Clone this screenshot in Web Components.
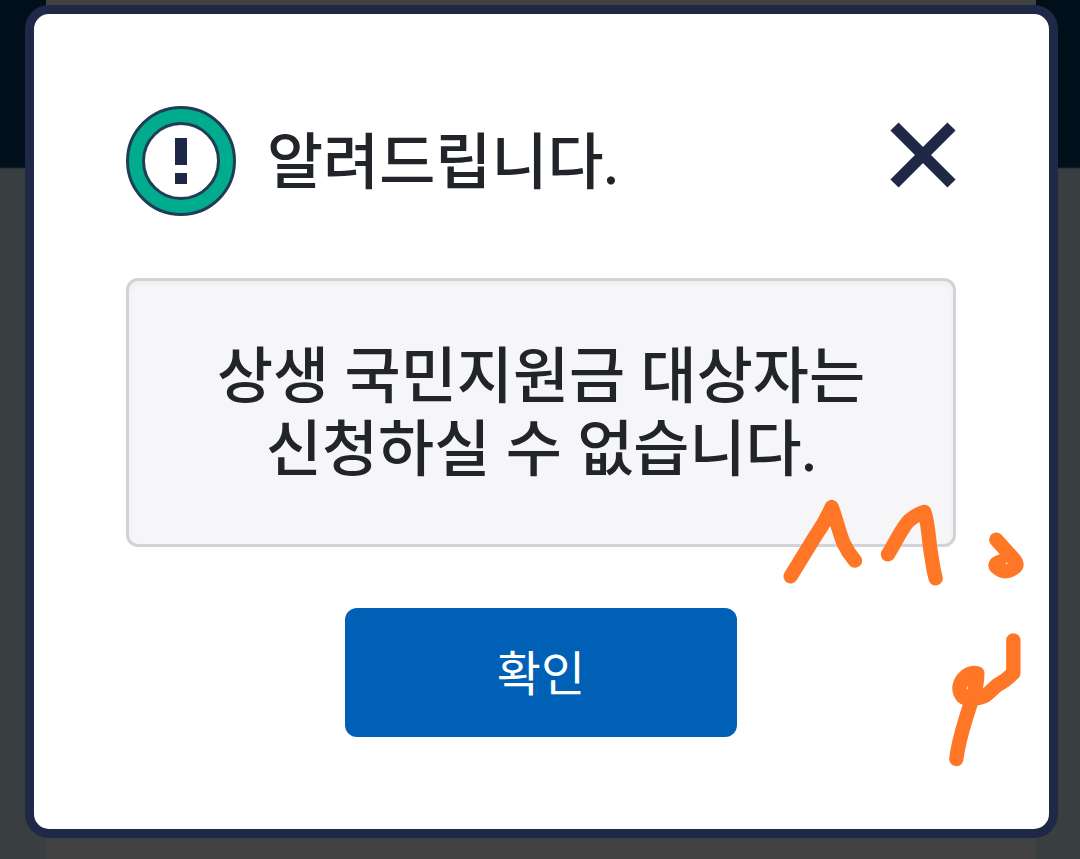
<!DOCTYPE html>
<html lang="ko">
<head>
<meta charset="utf-8">
<meta name="viewport" content="width=device-width, initial-scale=1">
<title>알려드립니다.</title>
<style>
  body { margin: 0; font-family: Lato, "Noto Sans CJK KR", sans-serif; color: #212529; }
</style>
</head>
<body>
<modal-stage>
  <alert-dialog>
    <alert-header slot="header">알려드립니다.</alert-header>
    <alert-message>상생 국민지원금 대상자는<br>신청하실 수 없습니다.</alert-message>
    <confirm-button slot="actions">확인</confirm-button>
    <pen-scribble slot="overlay"></pen-scribble>
  </alert-dialog>
</modal-stage>
<script>
class BaseElement extends HTMLElement {
  constructor() {
    super();
    this.attachShadow({ mode: "open" }).innerHTML = this.constructor.markup;
  }
}

customElements.define("modal-stage", class extends BaseElement {
  static markup = `
    <style>
      :host { display: grid; min-height: 100vh; background: #424242; }
      .backdrop, .content { grid-area: 1 / 1; }
      .backdrop { display: grid; grid-template-columns: 46px 1fr 44px; }
      .rail { background: linear-gradient(#000f19 167px, #393e40 169px); }
      .content { padding: 5px 22px 21px 25px; }
    </style>
    <div class="backdrop" aria-hidden="true">
      <div class="rail"></div><div></div><div class="rail"></div>
    </div>
    <div class="content"><slot></slot></div>`;
});

customElements.define("alert-dialog", class extends BaseElement {
  static markup = `
    <style>
      :host { display: block; }
      section {
        position: relative; box-sizing: border-box;
        display: flex; flex-direction: column; gap: 61px;
        padding: 92px 93px 92px 92px;
        border: 9px solid #1f2847; border-radius: 24px; background: #fff;
      }
      .actions { display: flex; justify-content: center; }
    </style>
    <section role="alertdialog" aria-label="알려드립니다.">
      <slot name="header"></slot>
      <slot></slot>
      <div class="actions"><slot name="actions"></slot></div>
      <slot name="overlay"></slot>
    </section>`;
});

customElements.define("alert-header", class extends BaseElement {
  static markup = `
    <style>
      :host { display: flex; align-items: center; gap: 31px; padding-bottom: 1px; }
      svg { display: block; }
      .icon { flex: none; width: 110px; height: 110px; }
      h1 { flex: 1; margin: 0; padding-bottom: 2px; font-size: 61px; line-height: 73px; font-weight: 500; white-space: nowrap; }
      button { margin: 0 0 12px; padding: 0; border: 0; background: none; color: #1f2847; cursor: pointer; }
      button svg { width: 66px; height: 66px; }
    </style>
    <svg class="icon" viewBox="0 0 110 110" aria-hidden="true">
      <circle cx="55" cy="55" r="45.5" fill="#fff" stroke="#1f3d55" stroke-width="19"/>
      <circle cx="55" cy="55" r="45.5" fill="none" stroke="#00ab8e" stroke-width="13"/>
      <path d="M49 32h12v27H49zM49 67h12v11H49z" fill="#1f2847"/>
    </svg>
    <h1><slot></slot></h1>
    <button type="button" aria-label="닫기">
      <svg viewBox="0 0 66 66" aria-hidden="true">
        <path d="M4.5 4.5 61.5 61.5M61.5 4.5 4.5 61.5" stroke="currentColor" stroke-width="11.5"/>
      </svg>
    </button>`;
});

customElements.define("alert-message", class extends BaseElement {
  static markup = `
    <style>
      :host { display: block; }
      p {
        margin: 0; padding: 57px 24px 60px;
        border: 3px solid #d3d3d7; border-radius: 12px; background: #f6f6f9;
        box-shadow: inset 0 3px 6px #0000000a;
        font-size: 61px; line-height: 73px; font-weight: 500; text-align: center;
      }
    </style>
    <p><slot></slot></p>`;
});

customElements.define("confirm-button", class extends BaseElement {
  static markup = `
    <style>
      :host { display: block; }
      button {
        display: block; min-width: 392px; padding: 29px 48px 28px;
        border: 0; border-radius: 12px; background: #0060b6; color: #fff;
        font: 400 48px/72px Lato, "Noto Sans CJK KR", sans-serif; cursor: pointer;
      }
    </style>
    <button type="button"><slot></slot></button>`;
});

customElements.define("pen-scribble", class extends BaseElement {
  static markup = `
    <style>
      :host { position: absolute; right: 0; bottom: 49px; width: 279px; height: 300px; pointer-events: none; }
      svg { display: block; width: 100%; height: 100%; }
    </style>
    <svg viewBox="0 0 837 900" fill="none" stroke="#ff7626" stroke-width="43" stroke-linecap="round" stroke-linejoin="round" aria-hidden="true">
      <path d="M62 289 138 165Q168 122 185 81C198 115 206 152 220 188Q234 218 255 242"/>
      <path d="M354 223C376 188 396 143 416 123Q440 102 463 96C473 120 476 170 481 208L491 270 497 295"/>
      <path d="M679 179 732 238Q746 254 734 262Q706 286 680 262Q670 250 693 244"/>
      <path d="M730 481V579C714 596 700 606 682 615C654 639 648 653 618 656Q592 660 578 650C562 630 566 606 588 588Q606 576 622 580C622 612 616 638 603 668C582 730 566 780 559 837"/>
      <path d="M596 604V644" stroke-width="24"/>
      <g fill="#ffd5bd" stroke="none">
        <path d="M707 245 714 250 709 254zM589 626 593 617 595 629z"/>
      </g>
    </svg>`;
});
</script>
</body>
</html>
